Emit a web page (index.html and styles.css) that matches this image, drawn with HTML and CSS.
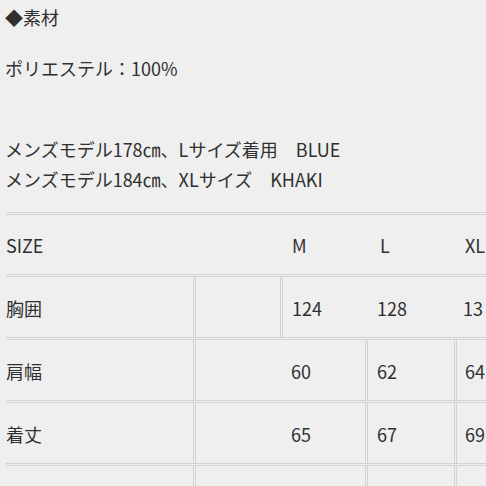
FILE: index.html
```html
<!DOCTYPE html>
<html lang="ja">
<head>
<meta charset="utf-8">
<link rel="stylesheet" href="styles.css">
</head>
<body>
<div class="page">
  <p class="title">◆素材</p>
  <p class="material">ポリエステル：100%</p>
  <div class="models">
    <p>メンズモデル178㎝、Lサイズ着用　BLUE</p>
    <p>メンズモデル184㎝、XLサイズ　KHAKI</p>
  </div>
  <div class="table">
    <div class="row head">
      <div class="cell label">SIZE</div>
      <div class="cell gap1"></div>
      <div class="cell hm">M</div>
      <div class="cell hl">L</div>
      <div class="cell hxl">XL</div>
    </div>
    <div class="row">
      <div class="cell label">胸囲</div>
      <div class="cell gap1 bl"></div>
      <div class="cell val first bl">124</div>
      <div class="cell val">128</div>
      <div class="cell val last">13</div>
    </div>
    <div class="row">
      <div class="cell label">肩幅</div>
      <div class="cell wide bl">60</div>
      <div class="cell v2 bl">62</div>
      <div class="cell v3 bl">64</div>
    </div>
    <div class="row">
      <div class="cell label">着丈</div>
      <div class="cell wide bl">65</div>
      <div class="cell v2 bl">67</div>
      <div class="cell v3 bl">69</div>
    </div>
    <div class="row">
      <div class="cell label"></div>
      <div class="cell wide bl"></div>
      <div class="cell v2 bl"></div>
      <div class="cell v3 bl"></div>
    </div>
  </div>
</div>
</body>
</html>
```

FILE: styles.css
```css
html, body {
  margin: 0;
  padding: 0;
  background: #efefef;
  overflow: hidden;
  width: 486px;
  height: 486px;
}

.page {
  font-family: "Noto Sans CJK JP", "Noto Sans", sans-serif;
  font-size: 18px;
  line-height: 30px;
  color: #303030;
  padding: 2px 0 0 5px;
}

p {
  margin: 0;
  white-space: nowrap;
}

.title {
  margin-bottom: 21px;
}

.material {
  margin-bottom: 51px;
}

.models {
  margin-bottom: 18px;
}

.table {
  margin-left: 1px;
  width: 480px;
  border-top: 3px double #d3d3d3;
}

.row {
  display: flex;
  height: 60px;
  border-bottom: 3px double #d3d3d3;
}

.row.head {
  height: 59px;
}

.cell {
  display: flex;
  align-items: center;
  padding-top: 1px;
  box-sizing: border-box;
  flex: none;
  white-space: nowrap;
}

.label {
  width: 187px;
}

.bl {
  border-left: 3px double #d3d3d3;
}

.gap1 {
  width: 87px;
}

.hm {
  width: 86px;
  padding-left: 12px;
}

.hl {
  width: 86px;
  padding-left: 14px;
}

.hxl {
  width: 34px;
  padding-left: 13px;
}

.val {
  width: 86px;
  padding-left: 9px;
}

.val.first {
  width: 88px;
}

.val.last {
  width: 33px;
}

.wide {
  width: 172px;
  padding-left: 95px;
}

.v2 {
  width: 89px;
  padding-left: 9px;
}

.v3 {
  width: 32px;
  padding-left: 8px;
}
```
